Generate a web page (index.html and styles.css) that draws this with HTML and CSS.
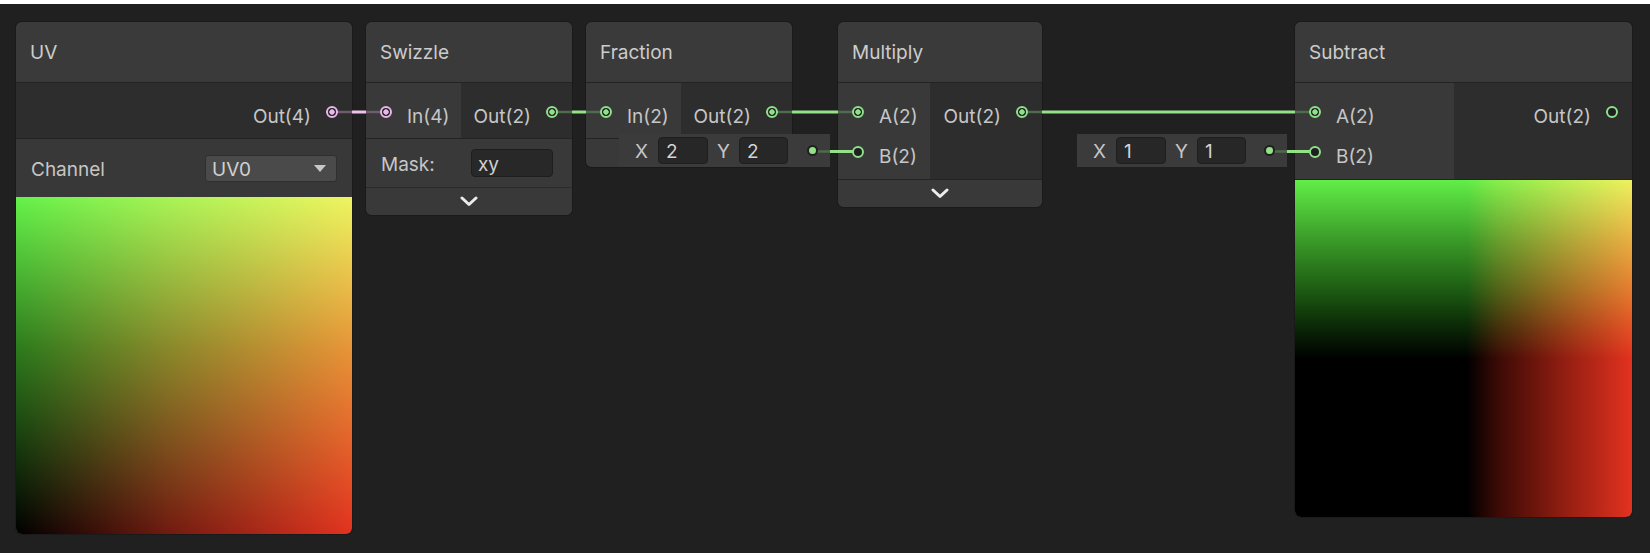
FILE: index.html
```html
<!DOCTYPE html>
<html>
<head>
<meta charset="utf-8">
<link rel="stylesheet" href="styles.css">
</head>
<body>
<div class="canvas">
  <div class="node node-uv">
    <div class="node-title">UV</div>
    <div class="ports">
      <div class="outputs grow">
        <div class="port out"><span class="label">Out(4)</span><span class="dot pink on"></span></div>
      </div>
    </div>
    <div class="control-row">
      <span class="ctrl-label">Channel</span>
      <div class="dropdown"><span>UV0</span><span class="caret"></span></div>
    </div>
    <div class="preview preview-uv"></div>
  </div>

  <div class="node node-swizzle">
    <div class="node-title">Swizzle</div>
    <div class="ports">
      <div class="inputs w95">
        <div class="port in"><span class="dot pink on"></span><span class="label">In(4)</span></div>
      </div>
      <div class="outputs grow">
        <div class="port out"><span class="label">Out(2)</span><span class="dot green on"></span></div>
      </div>
    </div>
    <div class="mask-row">
      <span class="ctrl-label">Mask:</span>
      <div class="text-field">xy</div>
    </div>
    <div class="expand-row"><svg width="18" height="11" viewBox="0 0 18 11"><polyline points="2,2 9,8.5 16,2" fill="none" stroke="#ececec" stroke-width="3" stroke-linecap="round" stroke-linejoin="round"/></svg></div>
  </div>

  <div class="node node-fraction">
    <div class="node-title">Fraction</div>
    <div class="ports">
      <div class="inputs w95">
        <div class="port in"><span class="dot green on"></span><span class="label">In(2)</span></div>
      </div>
      <div class="outputs grow">
        <div class="port out"><span class="label">Out(2)</span><span class="dot green on"></span></div>
      </div>
    </div>
    <div class="empty-row"></div>
  </div>

  <div class="node node-multiply">
    <div class="node-title">Multiply</div>
    <div class="ports tall">
      <div class="inputs w92">
        <div class="port in"><span class="dot green on"></span><span class="label">A(2)</span></div>
        <div class="port in"><span class="dot green"></span><span class="label">B(2)</span></div>
      </div>
      <div class="outputs grow">
        <div class="port out"><span class="label">Out(2)</span><span class="dot green on"></span></div>
      </div>
    </div>
    <div class="expand-row"><svg width="18" height="11" viewBox="0 0 18 11"><polyline points="2,2 9,8.5 16,2" fill="none" stroke="#ececec" stroke-width="3" stroke-linecap="round" stroke-linejoin="round"/></svg></div>
  </div>

  <div class="node node-subtract">
    <div class="node-title">Subtract</div>
    <div class="ports tall">
      <div class="inputs w159">
        <div class="port in"><span class="dot green on"></span><span class="label">A(2)</span></div>
        <div class="port in"><span class="dot green"></span><span class="label">B(2)</span></div>
      </div>
      <div class="outputs grow">
        <div class="port out"><span class="label">Out(2)</span><span class="dot green"></span></div>
      </div>
    </div>
    <div class="preview preview-sub"></div>
  </div>

  <div class="xy-box xy-mul">
    <span class="xy-label">X</span><span class="xy-field">2</span>
    <span class="xy-label ylab">Y</span><span class="xy-field f2">2</span>
    <span class="xy-dot"></span>
  </div>

  <div class="xy-box xy-sub">
    <span class="xy-label">X</span><span class="xy-field">1</span>
    <span class="xy-label ylab">Y</span><span class="xy-field f2">1</span>
    <span class="xy-dot"></span>
  </div>

  <svg class="wires" width="1650" height="549" viewBox="0 0 1650 549">
    <g stroke-width="2.5" fill="none">
      <line x1="332" y1="108" x2="352" y2="108" stroke="#6f5b70"/>
      <line x1="366" y1="108" x2="386" y2="108" stroke="#6f5b70"/>
      <line x1="552" y1="108" x2="572" y2="108" stroke="#4f6a4c"/>
      <line x1="586" y1="108" x2="606" y2="108" stroke="#4f6a4c"/>
      <line x1="772" y1="108" x2="792" y2="108" stroke="#4f6a4c"/>
      <line x1="838" y1="108" x2="858" y2="108" stroke="#4f6a4c"/>
      <line x1="1022" y1="108" x2="1042" y2="108" stroke="#4f6a4c"/>
      <line x1="1295" y1="108" x2="1315" y2="108" stroke="#4f6a4c"/>
      <line x1="813" y1="147.5" x2="830" y2="147.5" stroke="#4f6a4c"/>
      <line x1="1269" y1="147.5" x2="1287" y2="147.5" stroke="#4f6a4c"/>
    </g>
    <g stroke-width="3" fill="none">
      <line x1="352" y1="108" x2="366" y2="108" stroke="#f1c0ef"/>
      <line x1="572" y1="108" x2="586" y2="108" stroke="#93e288"/>
      <line x1="792" y1="108" x2="838" y2="108" stroke="#93e288"/>
      <line x1="1042" y1="108" x2="1295" y2="108" stroke="#93e288"/>
      <line x1="830" y1="147.5" x2="856" y2="147.5" stroke="#93e288"/>
      <line x1="1287" y1="147.5" x2="1313" y2="147.5" stroke="#93e288"/>
    </g>
  </svg>
</div>
</body>
</html>
```

FILE: styles.css
```css
* { box-sizing: border-box; }

body {
  margin: 0;
  background: #ffffff;
  font-family: Inter, "Noto Sans", "Liberation Sans", sans-serif;
}

.canvas {
  position: relative;
  margin-top: 4px;
  width: 1650px;
  height: 549px;
  background: #202020;
  overflow: hidden;
}

.wires {
  position: absolute;
  left: 0;
  top: 0;
  z-index: 1;
  pointer-events: none;
}

.node {
  position: absolute;
  top: 18px;
  display: flex;
  flex-direction: column;
  background: #393939;
  border-radius: 6px;
  box-shadow: 0 0 0 1px #1a1a1a;
  color: #c6c6c6;
  font-size: 19px;
  overflow: hidden;
}

.node-uv { left: 16px; width: 336px; }
.node-swizzle { left: 366px; width: 206px; }
.node-fraction { left: 586px; width: 206px; }
.node-multiply { left: 838px; width: 204px; }
.node-subtract { left: 1295px; width: 337px; }

.node-title {
  height: 61px;
  display: flex;
  align-items: center;
  padding-left: 14px;
  background: #3a3a3a;
  border-bottom: 1px solid #232323;
  color: #cccccc;
}

.ports {
  display: flex;
  height: 56px;
  border-bottom: 1px solid #232323;
}
.ports.tall { height: 97px; }

.inputs {
  background: #393939;
  padding-top: 9px;
  display: flex;
  flex-direction: column;
}
.w95 { width: 95px; }
.w92 { width: 92px; }
.w159 { width: 159px; }

.outputs {
  background: #2d2d2d;
  padding-top: 9px;
  display: flex;
  flex-direction: column;
}
.grow { flex: 1; }

.port {
  height: 40px;
  display: flex;
  align-items: center;
  gap: 15px;
  white-space: nowrap;
}
.port.in { padding-left: 14px; }
.port.out { padding-right: 14px; justify-content: flex-end; }

.label { padding-top: 8px; }

.dot {
  position: relative;
  z-index: 2;
  flex: none;
  width: 12px;
  height: 12px;
  border-radius: 50%;
  border: 2px solid;
  background: #1f1f1f;
}
.dot.green { border-color: #8fe08a; }
.dot.pink { border-color: #e8b6e8; }
.dot.green.on { background: radial-gradient(circle, #8fe08a 0 2.4px, #222 3px); }
.dot.pink.on { background: radial-gradient(circle, #e8b6e8 0 2.4px, #222 3px); }

.control-row {
  height: 58px;
  display: flex;
  align-items: center;
  justify-content: space-between;
  padding: 0 15px;
  background: #383838;
}

.ctrl-label { padding-top: 3px; }

.dropdown {
  width: 132px;
  height: 27px;
  display: flex;
  align-items: center;
  justify-content: space-between;
  padding: 2px 10px 0 6px;
  background: #4a4a4a;
  border: 1px solid #2f2f2f;
  border-radius: 3px;
  color: #d0d0d0;
}

.caret {
  width: 0;
  height: 0;
  border-left: 6px solid transparent;
  border-right: 6px solid transparent;
  border-top: 7px solid #c8c8c8;
  margin-top: -2px;
}

.preview {
  height: 337px;
  border-radius: 0 0 6px 6px;
}

.preview-uv {
  background-image:
    linear-gradient(to bottom, #64f24a 0%, #2c7a1c 45%, #000000 100%),
    linear-gradient(to right, #000000 0%, #701a10 45%, #e3321f 100%);
  background-blend-mode: screen;
}

.preview-sub {
  background-image:
    linear-gradient(to bottom, #62ee48 0%, #3a9a28 18%, #1c5a12 33%, #0a2606 44%, #000000 53%),
    linear-gradient(to right, #000000 0%, #000000 51%, #3a0a05 60%, #8a1c10 78%, #e3321f 100%);
  background-blend-mode: screen;
}

.mask-row {
  height: 49px;
  display: flex;
  align-items: center;
  padding: 0 19px 0 15px;
  background: #393939;
  border-bottom: 1px solid #2a2a2a;
}

.text-field {
  margin-left: auto;
  width: 82px;
  height: 28px;
  padding: 3px 0 0 6px;
  background: #282828;
  border: 1px solid #1e1e1e;
  border-radius: 4px;
  color: #d0d0d0;
}

.expand-row {
  height: 27px;
  display: flex;
  align-items: center;
  justify-content: center;
  background: #393939;
}

.empty-row {
  height: 28px;
  background: #393939;
}

.xy-box {
  position: absolute;
  top: 130px;
  height: 33px;
  display: flex;
  align-items: center;
  padding: 0 14px 0 16px;
  background: #3b3b3b;
  color: #c6c6c6;
  font-size: 19px;
}
.xy-mul { left: 619px; width: 211px; }
.xy-sub { left: 1077px; width: 210px; }

.xy-label {
  width: 23px;
  padding-top: 2px;
}
.xy-label.ylab {
  margin-left: 9px;
  width: 22px;
}

.xy-field {
  width: 50px;
  height: 27px;
  padding: 2px 0 0 7px;
  background: #272727;
  border: 1px solid #1e1e1e;
  border-radius: 4px;
  color: #d4d4d4;
}
.xy-field.f2 { width: 49px; }

.xy-dot {
  position: relative;
  z-index: 2;
  margin-left: auto;
  width: 7px;
  height: 7px;
  border-radius: 50%;
  background: #93e288;
  box-shadow: 0 0 0 2px #1f1f1f;
}
```
